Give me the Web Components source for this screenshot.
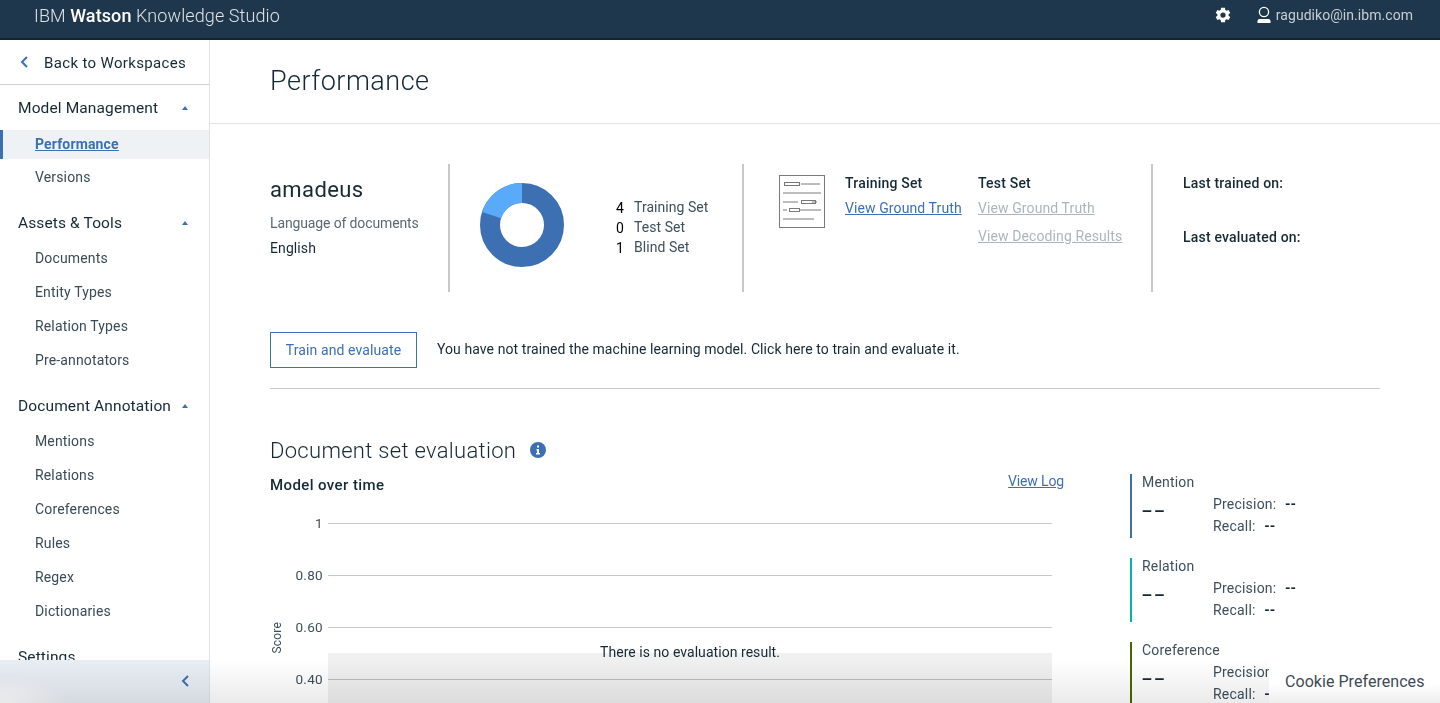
<!DOCTYPE html>
<html lang="en">
<head>
<meta charset="utf-8">
<title>Performance</title>
<style>
  html, body { margin: 0; height: 703px; overflow: hidden; background: #fff; }
  body { font-family: Roboto, "Noto Sans", sans-serif; color: #152935; font-size: 14px; }
</style>
</head>
<body>
<wks-app>
  <wks-header slot="header"></wks-header>
  <wks-sidebar slot="side">
    <nav-group label="Model Management">
      <nav-link active>Performance</nav-link>
      <nav-link>Versions</nav-link>
    </nav-group>
    <nav-group label="Assets &amp; Tools">
      <nav-link>Documents</nav-link>
      <nav-link>Entity Types</nav-link>
      <nav-link>Relation Types</nav-link>
      <nav-link>Pre-annotators</nav-link>
    </nav-group>
    <nav-group label="Document Annotation">
      <nav-link>Mentions</nav-link>
      <nav-link>Relations</nav-link>
      <nav-link>Coreferences</nav-link>
      <nav-link>Rules</nav-link>
      <nav-link>Regex</nav-link>
      <nav-link>Dictionaries</nav-link>
    </nav-group>
    <nav-group label="Settings"></nav-group>
  </wks-sidebar>
  <perf-page slot="main">
    <perf-summary></perf-summary>
    <train-bar></train-bar>
    <doc-evaluation>
      <score-chart slot="chart"></score-chart>
      <metric-card slot="metrics" label="Mention" color="#3d70b2"></metric-card>
      <metric-card slot="metrics" label="Relation" color="#00b6a0"></metric-card>
      <metric-card slot="metrics" label="Coreference" color="#4b6501"></metric-card>
    </doc-evaluation>
  </perf-page>
  <cookie-prefs slot="over"></cookie-prefs>
</wks-app>

<template id="wks-app">
  <style>
    :host { display: grid; grid-template: 40px 663px / 210px 1230px; position: relative; height: 703px; overflow: hidden; }
    ::slotted([slot=header]) { grid-column: 1 / 3; }
    /* grey wash over the bottom of the page, text stays dark under it */
    .fade { position: absolute; left: 0; right: 0; bottom: 0; height: 43px; pointer-events: none;
      background: linear-gradient(#fff, #eaeaea); mix-blend-mode: multiply; }
  </style>
  <slot name="header"></slot>
  <slot name="side"></slot>
  <slot name="main"></slot>
  <div class="fade"></div>
  <slot name="over"></slot>
</template>

<template id="wks-header">
  <style>
    :host { display: flex; align-items: center; box-sizing: border-box; height: 40px; padding: 0 27px 8px 34px;
      background: #1f374c; border-bottom: 2px solid #12252f; color: #dfe3e6; }
    .brand { font-size: 18px; font-weight: 300; letter-spacing: .1px; flex: 1; }
    b { color: #fff; font-weight: 500; }
    .gear { margin-right: 24px; display: block; }
    .user { display: block; margin-right: 4px; }
    .mail { font-size: 14px; letter-spacing: .05px; color: #c9ced3; margin-top: -1px; }
  </style>
  <div class="brand">IBM <b>Watson</b> Knowledge Studio</div>
  <svg class="gear" width="18" height="18" viewBox="0 0 24 24" fill="#fff"><path d="M19.4 13a7.6 7.6 0 0 0 0-2l2.3-1.8-2.3-4-2.7 1.1a7.6 7.6 0 0 0-1.700-1L14.600 2.400h-5.200L9 5.300a7.600 7.600 0 0 0-1.700 1L4.600 5.200l-2.300 4L4.600 11a7.600 7.600 0 0 0 0 2l-2.300 1.800 2.300 4 2.700-1.100a7.600 7.600 0 0 0 1.700 1l.4 2.900h5.200l.4-2.900a7.600 7.600 0 0 0 1.700-1l2.700 1.100 2.300-4zM12 15.500a3.500 3.500 0 1 1 0-7 3.500 3.500 0 0 1 0 7z"/></svg>
  <svg class="user" width="16" height="18" viewBox="0 0 16 18"><circle cx="8" cy="6" r="4.600" fill="none" stroke="#fff" stroke-width="1.300"/><path d="M1.500 17v-2a2 2 0 0 1 2-2h9a2 2 0 0 1 2 2v2z" fill="#fff"/></svg>
  <span class="mail">ragudiko@in.ibm.com</span>
</template>

<template id="wks-sidebar">
  <style>
    :host { display: flex; flex-direction: column; height: 663px; box-sizing: border-box; border-right: 1px solid #dfe3e6; }
    .back { display: flex; align-items: center; gap: 15px; flex: none; height: 45px; box-sizing: border-box; padding: 1px 0 0 20px;
      border-bottom: 1px solid #d0d0d0; font-size: 15px; letter-spacing: .35px; color: #152935; }
    .back svg { margin-top: -1px; }
    .list { flex: 1; overflow: hidden; padding-top: 5px; }
    .foot { flex: none; height: 43px; display: flex; align-items: center; justify-content: flex-end; padding-right: 19px;
      background: radial-gradient(ellipse 70px 26px at 0 100%, #fff, rgba(255,255,255,0)), #e9eef5; }
    .foot svg { margin-top: -2px; }
  </style>
  <div class="back">
    <svg width="9" height="12" viewBox="0 0 9 12"><path d="M7 1 2 6l5 5" fill="none" stroke="#3d70b2" stroke-width="2"/></svg>
    Back to Workspaces
  </div>
  <div class="list"><slot></slot></div>
  <div class="foot">
    <svg width="9" height="12" viewBox="0 0 9 12"><path d="M7 1 2 6l5 5" fill="none" stroke="#3d70b2" stroke-width="2"/></svg>
  </div>
</template>

<template id="nav-group">
  <style>
    :host { display: block; margin-bottom: 11px; }
    .head { display: flex; align-items: center; justify-content: space-between; box-sizing: border-box; height: 34px; padding: 1px 21px 0 18px;
      font-size: 15.500px; letter-spacing: .12px; color: #152935; }
    i { width: 0; height: 0; border: 3.500px solid transparent; border-top: 0; border-bottom: 4px solid #3d70b2; }
    .items { padding-top: 2px; }
  </style>
  <div class="head"><span id="label"></span><i id="caret"></i></div>
  <div class="items"><slot></slot></div>
</template>

<template id="nav-link">
  <style>
    :host { display: flex; align-items: center; height: 34px; box-sizing: border-box; padding-left: 35px;
      font-size: 14px; letter-spacing: .15px; color: #394b58; }
    :host([active]) { height: 29px; margin: 4px 0 1px; padding: 0 0 2px 32px; background: #eff2f5; border-left: 3px solid #3d70b2;
      color: #3d70b2; font-weight: 700; text-decoration: underline; }
  </style>
  <slot></slot>
</template>

<template id="perf-page">
  <style>
    :host { display: block; height: 663px; overflow: hidden; }
    h1 { margin: 0; height: 84px; box-sizing: border-box; padding: 21px 0 0 60px; border-bottom: 1px solid #dfe3e6;
      font-size: 27px; font-weight: 300; line-height: 40px; letter-spacing: .5px; color: #152935; }
    .body { padding: 40px 60px 0; }
  </style>
  <h1>Performance</h1>
  <div class="body"><slot></slot></div>
</template>

<template id="perf-summary">
  <style>
    :host { display: grid; grid-template-columns: 180px 294px 409px 1fr; height: 128px; font-size: 14px; }
    section { border-right: 2px solid #c8c8c8; box-sizing: border-box; height: 128px; }
    section:last-child { border: 0; }
    .model { padding-top: 12px; }
    .model h2 { margin: 0 0 10px; font-size: 22px; font-weight: 400; line-height: 28px; letter-spacing: .4px; }
    .model p { margin: 0 0 7px; line-height: 18px; letter-spacing: -.13px; color: #5a6872; }
    .model p + p { color: #152935; letter-spacing: .1px; }
    .sets { display: flex; align-items: flex-start; padding: 19px 0 0 30px; }
    .sets dl { display: grid; grid-template-columns: 18px 1fr; grid-auto-rows: 20px; margin: 14px 0 0 52px; line-height: 20px; }
    dt { color: #000; width: 18px; transform: translateY(1px); }
    dd { margin: 0; letter-spacing: .05px; color: #3d4f5c; }
    .truth { display: flex; padding: 11px 0 0 35px; }
    .truth svg { flex: none; margin-right: 20px; }
    .col { width: 133px; margin-top: -1px; white-space: nowrap; }
    h3 { margin: 0 0 6px; font-size: 14px; font-weight: 500; line-height: 18px; letter-spacing: .2px; }
    a { display: block; margin-bottom: 8px; line-height: 20px; letter-spacing: .1px; color: #3d70b2; text-decoration: underline; }
    a.off { color: #aeb5ba; }
    .dates { padding: 10px 0 0 30px; }
    .dates h3 { margin-bottom: 36px; }
  </style>
  <section class="model">
    <h2>amadeus</h2>
    <p>Language of documents</p>
    <p>English</p>
  </section>
  <section class="sets">
    <svg width="84" height="84" viewBox="0 0 84 84">
      <circle cx="42" cy="42" r="32" fill="none" stroke="#3d70b2" stroke-width="20"/>
      <path d="M42 0A42 42 0 0 0 2.060 29.020L21.080 35.200A22 22 0 0 1 42 20z" fill="#5aaafa"/>
    </svg>
    <dl>
      <dt>4</dt><dd>Training Set</dd>
      <dt>0</dt><dd>Test Set</dd>
      <dt>1</dt><dd>Blind Set</dd>
    </dl>
  </section>
  <section class="truth">
    <svg width="46" height="53" viewBox="0 0 46 53" fill="none" stroke="#7a7a7a">
      <rect x=".5" y=".5" width="45" height="52"/>
      <rect x="5.500" y="7.500" width="15" height="3"/>
      <path d="M22 9h19M4 18h38M4 27h15M33 27h5M4 35h4M21 35h21M4 44h31"/>
      <rect x="22.500" y="25.500" width="14" height="3"/>
      <rect x="10.500" y="33.500" width="10" height="3"/>
    </svg>
    <div class="col"><h3>Training Set</h3><a>View Ground Truth</a></div>
    <div class="col"><h3>Test Set</h3><a class="off">View Ground Truth</a><a class="off">View Decoding Results</a></div>
  </section>
  <section class="dates">
    <h3>Last trained on:</h3>
    <h3>Last evaluated on:</h3>
  </section>
</template>

<template id="train-bar">
  <style>
    :host { display: flex; align-items: center; gap: 20px; box-sizing: border-box; margin-top: 40px; height: 57px; padding-bottom: 20px;
      border-bottom: 1px solid #c8c8c8; font-size: 14px; letter-spacing: .08px; }
    button { all: unset; box-sizing: border-box; width: 147px; height: 36px; text-align: center; line-height: 31px;
      border: 1px solid #3d70b2; color: #3d70b2; letter-spacing: .1px; }
    span { margin-top: -3px; }
  </style>
  <button>Train and evaluate</button>
  <span>You have not trained the machine learning model. Click here to train and evaluate it.</span>
</template>

<template id="doc-evaluation">
  <style>
    :host { display: block; padding-top: 43px; }
    h2 { display: flex; align-items: center; gap: 14px; margin: 0; height: 36px; font-size: 22px; font-weight: 300; letter-spacing: .3px; }
    .row { display: grid; grid-template-columns: 794px 66px 1fr; margin-top: 4px; }
    .head { display: flex; justify-content: space-between; height: 25px; font-size: 14px; letter-spacing: -.15px; }
    h3 { margin: 1px 0 0; font-size: 15px; font-weight: 500; line-height: 24px; letter-spacing: .4px; }
    a { color: #3d70b2; text-decoration: underline; line-height: 18px; }
    .metrics { grid-column: 3; margin-top: 2px; }
  </style>
  <h2>Document set evaluation
    <svg width="16" height="16" viewBox="0 0 16 16"><circle cx="8" cy="8" r="8" fill="#3d70b2"/><path d="M7 3.500h2v2H7zM6.500 7h2.500v4h1v1.500H6V11h1V8.500h-.5z" fill="#fff"/></svg>
  </h2>
  <div class="row">
    <div>
      <div class="head"><h3>Model over time</h3><a>View Log</a></div>
      <slot name="chart"></slot>
    </div>
    <span></span>
    <div class="metrics"><slot name="metrics"></slot></div>
  </div>
</template>

<template id="score-chart">
  <style>
    :host { display: block; position: relative; margin-right: 12px; font-size: 13.500px; color: #3d4f5c; }
    .tick { display: flex; align-items: center; height: 52px; }
    .tick span { width: 53px; text-align: right; letter-spacing: .3px; margin-right: 5px; }
    .tick i { flex: 1; height: 1px; background: #c8c8c8; }
    .axis { position: absolute; left: 0; top: 125px; font-size: 12px; letter-spacing: .2px; writing-mode: vertical-rl; transform: rotate(180deg); }
    .empty { position: absolute; left: 58px; right: 0; top: 156px; height: 60px; background: rgba(0,0,0,.06); }
    .msg { position: absolute; left: 58px; right: 0; top: 147px; text-align: center; font-size: 14px; letter-spacing: .05px; line-height: 17px; color: #152935; }
  </style>
  <div class="tick"><span>1</span><i></i></div>
  <div class="tick"><span>0.80</span><i></i></div>
  <div class="tick"><span>0.60</span><i></i></div>
  <div class="tick"><span>0.40</span><i></i></div>
  <span class="axis">Score</span>
  <div class="empty"></div>
  <div class="msg">There is no evaluation result.</div>
</template>

<template id="metric-card">
  <style>
    :host { display: grid; grid-template-columns: 71px 1fr; grid-template-rows: 19px 1fr; box-sizing: border-box; height: 64px; margin-bottom: 20px;
      padding-left: 10px; border-left: 2px solid var(--bar); font-size: 14px; letter-spacing: .2px; color: #3d4f5c; }
    .name { grid-column: 1 / 3; line-height: 16px; }
    /* the reference dashes are wider than this font's hyphen */
    .big { display: inline-block; font-size: 24px; letter-spacing: 1.700px; color: #152935; line-height: 34px; transform: scaleX(1.500); transform-origin: 0 50%; }
    .nums div { height: 22px; line-height: 22px; white-space: nowrap; }
    b { margin-left: 5px; color: #152935; font-weight: 700; letter-spacing: 0; }
  </style>
  <span class="name" id="name"></span>
  <span class="big">--</span>
  <div class="nums">
    <div>Precision: <b>--</b></div>
    <div>Recall: <b>--</b></div>
  </div>
</template>

<template id="cookie-prefs">
  <style>
    :host { position: absolute; right: 0; bottom: 0; width: 171px; height: 43px; display: flex; align-items: center; padding-left: 16px; box-sizing: border-box;
      font-size: 16px; letter-spacing: .05px; color: #3c4a55;
      background: linear-gradient(#fff, #fff 55%, #eee); }
  </style>
  Cookie Preferences
</template>

<script>
  // each element just clones its own template into an open shadow root
  class Base extends HTMLElement {
    constructor() {
      super();
      this.attachShadow({ mode: 'open' });
      const tpl = document.getElementById(this.localName);
      this.shadowRoot.appendChild(tpl.content.cloneNode(true));
    }
  }

  class NavGroup extends Base {
    connectedCallback() {
      this.shadowRoot.getElementById('label').textContent = this.getAttribute('label');
      if (!this.children.length) this.shadowRoot.getElementById('caret').remove();
    }
  }

  class MetricCard extends Base {
    connectedCallback() {
      this.shadowRoot.getElementById('name').textContent = this.getAttribute('label');
      this.style.setProperty('--bar', this.getAttribute('color'));
    }
  }

  for (const name of ['wks-app', 'wks-header', 'wks-sidebar', 'nav-link', 'perf-page', 'perf-summary',
                      'train-bar', 'doc-evaluation', 'score-chart', 'cookie-prefs']) {
    customElements.define(name, class extends Base {});
  }
  customElements.define('nav-group', NavGroup);
  customElements.define('metric-card', MetricCard);
</script>
</body>
</html>
